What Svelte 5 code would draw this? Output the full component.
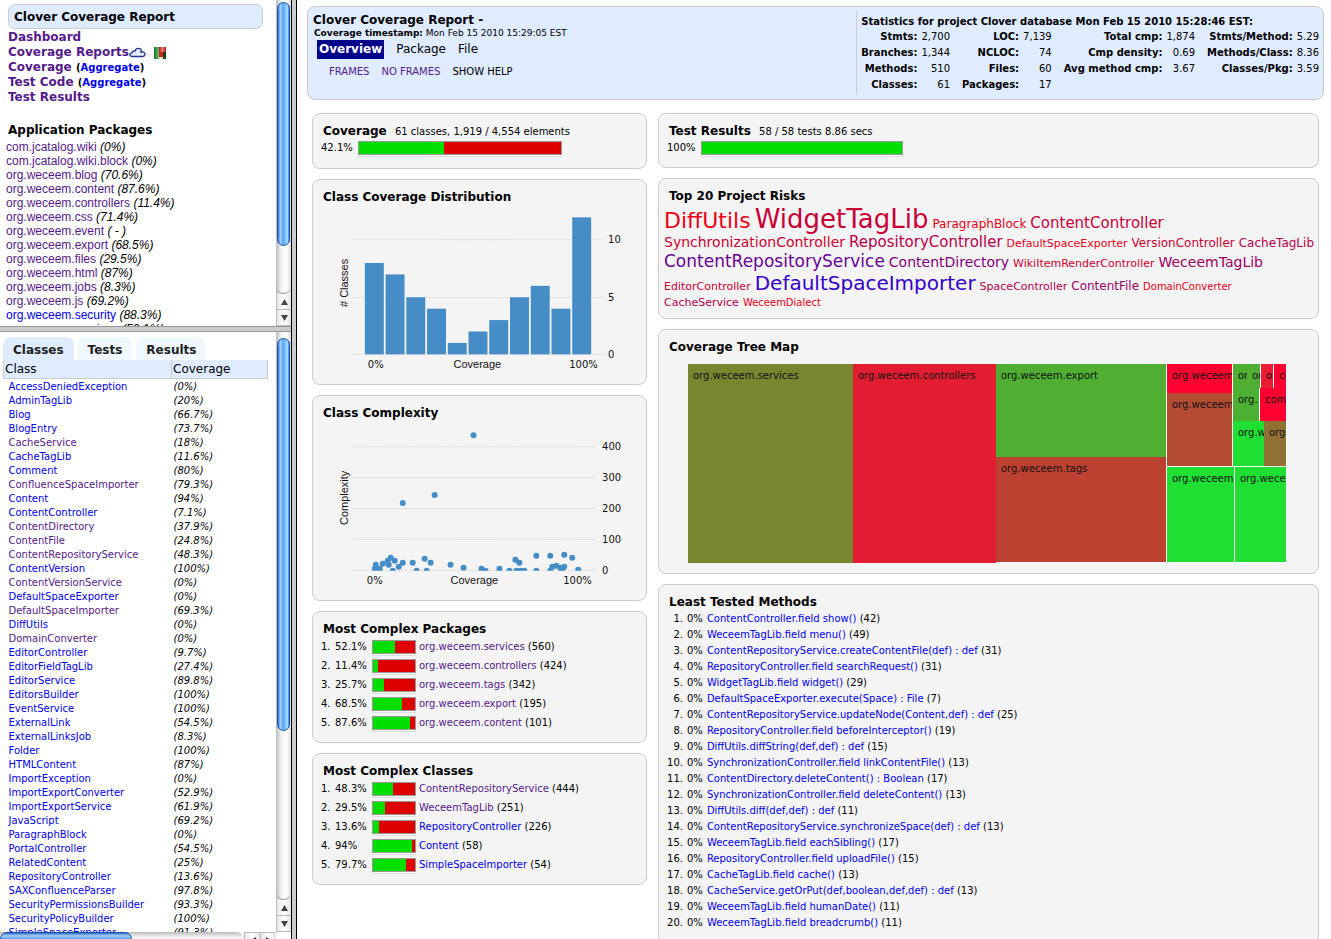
<script>
  const packages = [
    ['com.jcatalog.wiki', '0%'], ['com.jcatalog.wiki.block', '0%'], ['org.weceem.blog', '70.6%'],
    ['org.weceem.content', '87.6%'], ['org.weceem.controllers', '11.4%'], ['org.weceem.css', '71.4%'],
    ['org.weceem.event', ' - '], ['org.weceem.export', '68.5%'], ['org.weceem.files', '29.5%'],
    ['org.weceem.html', '87%'], ['org.weceem.jobs', '8.3%'], ['org.weceem.js', '69.2%'],
    ['org.weceem.security', '88.3%', true], ['org.weceem.services', '52.1%']
  ];
  // name, coverage, visited
  const classes = [
    ['AccessDeniedException', '0%'], ['AdminTagLib', '20%'], ['Blog', '66.7%'], ['BlogEntry', '73.7%'],
    ['CacheService', '18%', 1], ['CacheTagLib', '11.6%'], ['Comment', '80%'], ['ConfluenceSpaceImporter', '79.3%', 1],
    ['Content', '94%'], ['ContentController', '7.1%'], ['ContentDirectory', '37.9%', 1], ['ContentFile', '24.8%', 1],
    ['ContentRepositoryService', '48.3%', 1], ['ContentVersion', '100%'], ['ContentVersionService', '0%', 1],
    ['DefaultSpaceExporter', '0%'], ['DefaultSpaceImporter', '69.3%', 1], ['DiffUtils', '0%'], ['DomainConverter', '0%', 1],
    ['EditorController', '9.7%'], ['EditorFieldTagLib', '27.4%'], ['EditorService', '89.8%'], ['EditorsBuilder', '100%'],
    ['EventService', '100%'], ['ExternalLink', '54.5%'], ['ExternalLinksJob', '8.3%'], ['Folder', '100%'],
    ['HTMLContent', '87%'], ['ImportException', '0%'], ['ImportExportConverter', '52.9%'], ['ImportExportService', '61.9%'],
    ['JavaScript', '69.2%'], ['ParagraphBlock', '0%'], ['PortalController', '54.5%'], ['RelatedContent', '25%'],
    ['RepositoryController', '13.6%'], ['SAXConfluenceParser', '97.8%'], ['SecurityPermissionsBuilder', '93.3%'],
    ['SecurityPolicyBuilder', '100%'], ['SimpleSpaceExporter', '91.3%']
  ];
  const stats = [
    ['Stmts:', '2,700', 'LOC:', '7,139', 'Total cmp:', '1,874', 'Stmts/Method:', '5.29'],
    ['Branches:', '1,344', 'NCLOC:', '74', 'Cmp density:', '0.69', 'Methods/Class:', '8.36'],
    ['Methods:', '510', 'Files:', '60', 'Avg method cmp:', '3.67', 'Classes/Pkg:', '3.59'],
    ['Classes:', '61', 'Packages:', '17', '', '', '', '']
  ];
  const bars = [8, 7, 5, 4, 1, 2, 3, 5, 6, 4, 12];
  const dots = [
    [474, 435], [403, 503], [435, 495], [376, 565], [375, 569], [380, 569], [383, 564], [389, 565], [391, 558],
    [388, 561], [395, 561], [393, 571], [399, 567], [403, 563], [413, 563], [417, 571], [425, 559], [427, 571],
    [431, 563], [451, 565], [464, 568], [482, 569], [486, 571], [500, 569], [510, 571], [516, 560], [520, 563],
    [517, 571], [521, 571], [525, 571], [537, 556], [537, 571], [551, 556], [551, 571], [553, 567], [557, 566],
    [561, 568], [565, 555], [563, 570], [565, 567], [573, 558], [579, 570]
  ];
  const complexity = [
    ['Most Complex Packages', [
      ['52.1%', 'org.weceem.services', 560, 1], ['11.4%', 'org.weceem.controllers', 424, 1],
      ['25.7%', 'org.weceem.tags', 342, 1], ['68.5%', 'org.weceem.export', 195, 1], ['87.6%', 'org.weceem.content', 101, 1]
    ]],
    ['Most Complex Classes', [
      ['48.3%', 'ContentRepositoryService', 444, 1], ['29.5%', 'WeceemTagLib', 251, 1],
      ['13.6%', 'RepositoryController', 226], ['94%', 'Content', 58], ['79.7%', 'SimpleSpaceImporter', 54]
    ]]
  ];
  // row height, then name, font size, colour
  const risks = [
    [29, [['DiffUtils', 22, '#ec0017'], ['WidgetTagLib', 26, '#c80037'], ['ParagraphBlock', 12, '#e2001d'], ['ContentController', 15, '#c80037']]],
    [20, [['SynchronizationController', 14, '#cc0033'], ['RepositoryController', 15, '#b4004b'], ['DefaultSpaceExporter', 11, '#ec0017'], ['VersionController', 12, '#cc0033'], ['CacheTagLib', 12, '#b4004b']]],
    [20, [['ContentRepositoryService', 17, '#6a0095'], ['ContentDirectory', 14, '#84007b'], ['WikiItemRenderController', 11, '#cc0033'], ['WeceemTagLib', 14, '#9c0063']]],
    [23, [['EditorController', 11, '#cc0033'], ['DefaultSpaceImporter', 20, '#3400cb'], ['SpaceController', 11, '#b4004b'], ['ContentFile', 12, '#9c0063'], ['DomainConverter', 10, '#ec0017']]],
    [16, [['CacheService', 11, '#b4004b'], ['WeceemDialect', 10, '#ec0017']]]
  ];
  // x, y, width, height, colour, label
  const cells = [
    [0, 0, 165, 199, '#7a8530', 'org.weceem.services'],
    [165, 0, 143, 199, '#e31d31', 'org.weceem.controllers'],
    [308, 0, 170, 93, '#50ae32', 'org.weceem.export'],
    [308, 93, 170, 105, '#bd4131', 'org.weceem.tags'],
    [479, 0, 65, 29, '#ff0131', 'org.weceem'],
    [479, 29, 65, 73, '#b34c33', 'org.weceem'],
    [545, 0, 14, 24, '#50ae32', 'or'],
    [559, 0, 13, 24, '#50ae32', 'or'],
    [573, 0, 12, 24, '#ec1a33', 'o'],
    [586, 0, 12, 24, '#ff0131', 'co'],
    [545, 24, 26, 33, '#4bb133', 'org.'],
    [572, 24, 26, 33, '#ff0131', 'com'],
    [545, 57, 31, 45, '#20df33', 'org.w'],
    [576, 57, 22, 45, '#917133', 'org'],
    [479, 103, 67, 95, '#20df33', 'org.weceem'],
    [547, 103, 51, 95, '#20df33', 'org.wece']
  ];
  const methods = [
    ['ContentController.field show()', 42], ['WeceemTagLib.field menu()', 49],
    ['ContentRepositoryService.createContentFile(def) : def', 31], ['RepositoryController.field searchRequest()', 31],
    ['WidgetTagLib.field widget()', 29], ['DefaultSpaceExporter.execute(Space) : File', 7],
    ['ContentRepositoryService.updateNode(Content,def) : def', 25], ['RepositoryController.field beforeInterceptor()', 19],
    ['DiffUtils.diffString(def,def) : def', 15], ['SynchronizationController.field linkContentFile()', 13],
    ['ContentDirectory.deleteContent() : Boolean', 17], ['SynchronizationController.field deleteContent()', 13],
    ['DiffUtils.diff(def,def) : def', 11], ['ContentRepositoryService.synchronizeSpace(def) : def', 13],
    ['WeceemTagLib.field eachSibling()', 17], ['RepositoryController.field uploadFile()', 15],
    ['CacheTagLib.field cache()', 13], ['CacheService.getOrPut(def,boolean,def,def) : def', 13],
    ['WeceemTagLib.field humanDate()', 11], ['WeceemTagLib.field breadcrumb()', 11]
  ];
</script>

{#snippet vscroll(size)}
  <div class="vscroll">
    <div class="track"><div class="thumb" style="height: {size}%"></div></div>
    <button aria-label="Scroll up"><svg width="7" height="6" viewBox="0 0 7 6"><path d="M3.500 0L7 6H0Z" fill="#444" /></svg></button>
    <button aria-label="Scroll down"><svg width="7" height="6" viewBox="0 0 7 6"><path d="M0 0H7L3.500 6Z" fill="#444" /></svg></button>
  </div>
{/snippet}

<div class="frames">
  <div class="side">
    <section class="pane top">
      <div class="content">
        <h1>Clover Coverage Report</h1>
        <nav class="links">
          <div><a href="#dashboard">Dashboard</a></div>
          <div class="reports">
            <a href="#reports">Coverage Reports</a>
            <svg width="17" height="11" viewBox="0 0 17 11"><path d="M3.500 9.500C0 9.500 0 6.200 3 5.800C3.500 4.200 5 3.600 6 4.200C6.800 .3 12.600 .3 12.300 4.200C12.200 4.900 11.700 5.300 11.300 5.500C13 4.300 16.300 5.200 16 7.600C15.800 9 14.500 9.500 13.500 9.500Z" fill="#e4ecfb" stroke="#26358c" stroke-width="1.300" /></svg>
            <svg class="map" width="12" height="12" viewBox="0 0 12 12">
              <defs>
                <linearGradient id="mg"><stop offset="0" stop-color="#15702a" /><stop offset="1" stop-color="#6cc46c" /></linearGradient>
                <linearGradient id="mr"><stop offset="0" stop-color="#b01010" /><stop offset=".5" stop-color="#f08070" /><stop offset="1" stop-color="#b00c0c" /></linearGradient>
              </defs>
              <path d="M0 0H5V12H0Z" fill="url(#mg)" /><path d="M5 0H12V5H5Z" fill="url(#mr)" />
              <path d="M5 5H9V10H5Z" fill="#d61f1f" /><path d="M9 5H12V12H9Z" fill="#0d4a12" /><path d="M5 10H9V12H5Z" fill="#f5d9d4" />
            </svg>
          </div>
          <div><a href="#coverage">Coverage</a> <small>(<a class="new" href="#agg">Aggregate</a>)</small></div>
          <div><a href="#test">Test Code</a> <small>(<a class="new" href="#agg2">Aggregate</a>)</small></div>
          <div><a href="#results">Test Results</a></div>
        </nav>
        <h2>Application Packages</h2>
        <ul class="packages">
          {#each packages as [name, pct, fresh]}
            <li><a class:new={fresh} href="#{name}">{name}</a> <i>({pct})</i></li>
          {/each}
        </ul>
      </div>
      {@render vscroll(84)}
    </section>

    <div class="hdivider"></div>

    <section class="pane bottom">
      <div class="content">
        <div class="tabs">
          <button class="on">Classes</button><button>Tests</button><button>Results</button>
        </div>
        <table class="classes">
          <thead><tr><th>Class</th><th>Coverage</th></tr></thead>
          <tbody>
            {#each classes as [name, pct, seen]}
              <tr><td><a class:new={!seen} href="#{name}">{name}</a></td><td><i>({pct})</i></td></tr>
            {/each}
          </tbody>
        </table>
      </div>
      {@render vscroll(70)}
      <div class="hscroll">
        <div class="htrack"><div class="hthumb"></div></div>
        <button aria-label="Scroll left"><svg width="6" height="7" viewBox="0 0 6 7"><path d="M6 0V7L0 3.500Z" fill="#444" /></svg></button>
        <button aria-label="Scroll right"><svg width="6" height="7" viewBox="0 0 6 7"><path d="M0 0V7L6 3.500Z" fill="#444" /></svg></button>
      </div>
    </section>
  </div>
  <div class="vdivider"></div>

  <main>
    <header>
      <div class="title">
        <h1>Clover Coverage Report -</h1>
        <p><b>Coverage timestamp:</b> Mon Feb 15 2010 15:29:05 EST</p>
        <nav class="levels"><a class="on" href="#overview">Overview</a><span>Package</span><span>File</span></nav>
        <nav class="modes"><a href="#frames">FRAMES</a><a href="#noframes">NO FRAMES</a><button>SHOW HELP</button></nav>
      </div>
      <div class="stats">
        <table>
          <caption>Statistics for project Clover database Mon Feb 15 2010 15:28:46 EST:</caption>
          <tbody>
            {#each stats as row}
              <tr>{#each row as cell, i}{#if i % 2 === 0}<th>{cell}</th>{:else}<td>{cell}</td>{/if}{/each}</tr>
            {/each}
          </tbody>
        </table>
      </div>
    </header>

    <div class="dash">
      <div class="col">
        <section class="card summary">
          <h3>Coverage <span>61 classes, 1,919 / 4,554 elements</span></h3>
          <div class="meter"><span>42.1%</span><div class="bar"><div style="width: 42.1%"></div></div></div>
        </section>

        <section class="card chart">
          <h3>Class Coverage Distribution</h3>
          <svg viewBox="313 205 334 178" height="178">
            {#each [[239, 10], [297, 5], [354, 0]] as [y, label]}
              <line x1="353" x2="603" y1={y + 0.5} y2={y + 0.5} />
              <text x="609" y={y + 4}>{label}</text>
            {/each}
            {#each bars as v, i}
              <rect x={365 + i * 20.8} y={354.5 - v * 11.45} width="19" height={v * 11.45} />
            {/each}
            <text x="368" y="368">0%</text><text class="ar" x="454" y="368">Coverage</text><text x="570" y="368">100%</text>
            <text class="ar" transform="translate(348 307) rotate(-90)"># Classes</text>
          </svg>
        </section>

        <section class="card chart">
          <h3>Class Complexity</h3>
          <svg viewBox="313 421 334 178" height="178">
            <defs><clipPath id="plot"><path d="M340 420H620V571H340Z" /></clipPath></defs>
            {#each [[446, 400], [477, 300], [508, 200], [539, 100], [570, 0]] as [y, label]}
              <line x1="353" x2="596" y1={y + 0.5} y2={y + 0.5} />
              <text x="603" y={y + 4}>{label}</text>
            {/each}
            <g clip-path="url(#plot)">{#each dots as [x, y]}<circle cx={x} cy={y} r="3" />{/each}</g>
            <text x="367" y="584">0%</text><text class="ar" x="451" y="584">Coverage</text><text x="564" y="584">100%</text>
            <text class="ar" transform="translate(348 525) rotate(-90)">Complexity</text>
          </svg>
        </section>

        {#each complexity as [title, rows]}
          <section class="card complex">
            <h3>{title}</h3>
            <table>
              <tbody>
                {#each rows as [pct, name, n, seen], i}
                  <tr>
                    <td>{i + 1}.</td><td>{pct}</td>
                    <td><div class="bar"><div style="width: {pct}"></div></div></td>
                    <td><a class:new={!seen} href="#{name}">{name}</a> ({n})</td>
                  </tr>
                {/each}
              </tbody>
            </table>
          </section>
        {/each}
      </div>

      <div class="col">
        <section class="card summary tests">
          <h3>Test Results <span>58 / 58 tests 8.86 secs</span></h3>
          <div class="meter"><span>100%</span><div class="bar"><div style="width: 100%"></div></div></div>
        </section>

        <section class="card risks">
          <h3>Top 20 Project Risks</h3>
          {#each risks as [height, items]}
            <div class="cloudrow" style="height: {height}px">
              {#each items as [name, size, color]}
                <a href="#{name}" style="font-size: {size}px; color: {color}">{name}</a>
              {/each}
            </div>
          {/each}
        </section>

        <section class="card tree">
          <h3>Coverage Tree Map</h3>
          <svg viewBox="0 0 599 199" width="599" height="199">
            <rect width="599" height="199" fill="#fff" />
            {#each cells as [x, y, w, h, color, label]}
              <svg {x} {y} width={w} height={h}>
                <rect width={w} height={h} fill={color} />
                <text x="5" y="15">{label}</text>
              </svg>
            {/each}
          </svg>
        </section>

        <section class="card least">
          <h3>Least Tested Methods</h3>
          <table>
            <tbody>
              {#each methods as [name, n], i}
                <tr><td>{i + 1}.</td><td>0%</td><td><a class="new" href="#m{i}">{name}</a> ({n})</td></tr>
              {/each}
            </tbody>
          </table>
        </section>
      </div>
    </div>
  </main>
</div>

<style>
  :global(body) { margin: 0; background: #fff; }
  .frames { display: flex; height: 100vh; overflow: hidden; font: 10px/14px "DejaVu Sans", Verdana, sans-serif; color: #000; }
  h1, h2, h3, p, ul { margin: 0; padding: 0; }
  h1, h2, h3 { font-size: 12px; line-height: 16px; font-weight: bold; }
  a { color: #551a8b; text-decoration: none; }
  a.new { color: #0000ee; }
  button { border: 0; padding: 0; font: inherit; color: inherit; background: none; }
  table { border-collapse: collapse; }
  td, th { padding: 0; }

  .side { flex: 0 1 291px; display: flex; flex-direction: column; min-width: 0; }
  .vdivider { flex: none; width: 4px; background: #ccc; border: solid; border-width: 0 1px; border-color: #999 #000; }
  .hdivider { flex: none; height: 4px; background: #ccc; border: solid; border-width: 1px 0; border-color: #999 #000; }
  .pane { display: grid; grid-template-columns: minmax(0, 1fr) 15px; overflow: hidden; }
  .content { overflow: hidden; min-height: 0; }
  .top { flex: 0 0 326px; grid-template-rows: minmax(0, 1fr); }
  .bottom { flex: 1; min-height: 0; grid-template-rows: minmax(0, 1fr) 7px; }

  .top h1 { margin: 4px 13px 1px 8px; padding: 4px 5px 3px; border: 1px solid #ccc; border-radius: 7px; background: #dfebff; }
  .links { padding-left: 8px; font-size: 12px; font-weight: bold; line-height: 15px; }
  .links small { font-size: 10px; }
  .reports { display: flex; align-items: center; height: 15px; }
  .links .map { margin-left: 8px; }
  .top h2 { margin: 17px 0 2px 8px; }
  .packages { list-style: none; padding-left: 6px; font: 12px/14px "Liberation Sans", Arial, sans-serif; white-space: pre; }

  .vscroll { display: flex; flex-direction: column; background: linear-gradient(90deg, #bbb, #f4f4f4 35%, #fff 70%, #ddd); min-height: 0; }
  .track { flex: 1; min-height: 0; border-radius: 0 0 8px 8px; border-bottom: 1px solid #999; padding-top: 2px; box-sizing: border-box; }
  .bottom .track { padding-top: 6px; }
  .thumb { margin: 0 1px; box-sizing: border-box; border: 1px solid #1d4fa0; border-radius: 7px; background: linear-gradient(90deg, #2b6fd0, #a8d0fa 22%, #5ba4f0 45%, #6db8fa 60%, #a5e2ff 85%, #3b80d8); }
  .vscroll button, .hscroll button { display: grid; place-items: center; background: linear-gradient(90deg, #e8e8e8, #fff 50%, #e4e4e4); border: solid #bbb; }
  .vscroll button { height: 16px; border-width: 0 0 1px 1px; }
  .hscroll { display: flex; grid-column: 1 / 3; padding-right: 15px; overflow: hidden; }
  .htrack { flex: 1; height: 15px; background: linear-gradient(#bbb, #f4f4f4 35%, #fff); border-radius: 0 8px 8px 0; }
  .hthumb { width: 54%; height: 15px; box-sizing: border-box; border: 1px solid #1d4fa0; border-radius: 7px; background: linear-gradient(#2b6fd0, #a8d0fa 22%, #5ba4f0 45%, #a5e2ff); }
  .hscroll button { width: 16px; height: 15px; border-width: 1px 0 0 1px; }

  .tabs { display: flex; gap: 4px; margin: 5px 0 0 3px; }
  .tabs button { height: 23px; padding: 2px 10px 0; border-radius: 8px 8px 0 0; background: #eff7ff; font-size: 12px; font-weight: bold; color: #222; }
  .tabs .on { background: #dfebff; }
  .classes { margin-left: 3px; width: 265px; table-layout: fixed; }
  .classes th { width: 94px; height: 18px; padding: 0 0 0 1px; background: #dfebff; border: 1px solid #ccc; border-width: 0 1px 1px; font-size: 12px; font-weight: normal; text-align: left; }
  .classes th:first-child { width: auto; }
  .classes tbody::before { content: ""; display: block; height: 1px; }
  .classes td { height: 14px; padding-left: 2px; white-space: nowrap; }
  .classes td:first-child { padding-left: 5px; }

  main { flex: 1; min-width: 0; padding: 6px 7px 0 10px; overflow: hidden; }
  header { display: flex; justify-content: space-between; box-sizing: border-box; min-height: 94px; padding: 4px 4px 4px 5px; border: 1px solid #ccc; border-radius: 8px; background: #dfebff; }
  header h1 { padding-top: 1px; }
  header p { padding-left: 1px; font-size: 9px; line-height: 10px; }
  .levels { display: flex; align-items: center; gap: 12px; padding: 2px 0 0 4px; font-size: 12px; line-height: 19px; }
  .levels .on { padding: 0 2px; background: #00008b; color: #fff; font-weight: bold; }
  .modes { display: flex; gap: 12px; padding: 6px 0 0 16px; }
  .stats { border-left: 1px solid #ccc; padding-left: 4px; }
  .stats caption { padding: 3px 0 0; text-align: left; font-weight: bold; white-space: nowrap; line-height: 15px; }
  .stats td, .stats th { height: 16px; line-height: 16px; text-align: right; white-space: nowrap; }
  .stats td { padding-left: 4px; }
  .stats th:not(:first-child) { padding-left: 12px; }

  .dash { display: grid; grid-template-columns: minmax(0, 335fr) minmax(0, 661fr); gap: 11px; padding: 13px 5px 0; }
  .col { display: flex; flex-direction: column; gap: 10px; }
  .card { box-sizing: border-box; border: 1px solid #ccc; border-radius: 8px; background: #f4f4f4; padding: 9px 0 0 10px; }
  .summary { height: 56px; }
  .tests { height: 55px; }
  .summary h3 span { margin-left: 4px; font-size: 10px; font-weight: normal; }
  .meter { display: flex; align-items: center; gap: 5px; margin: 1px 0 0 -2px; }
  .bar { box-sizing: border-box; border: 1px solid #999; background: #df0000; box-shadow: 0 1px #f8f8f8, 0 2px #ddd; }
  .bar div { height: 100%; background: #00df00; }
  .meter .bar { width: 204px; height: 14px; }
  .tests .bar { width: 202px; }
  .chart { padding: 9px 0 0; height: 206px; }
  .chart h3 { padding-left: 10px; }
  .chart svg { display: block; width: 100%; }
  .chart rect, .chart circle { fill: #468dc8; }
  .chart line { stroke: #ddd; stroke-dasharray: 3 1; }
  svg text { font: 10px "DejaVu Sans", Verdana, sans-serif; fill: #111; }
  .chart text.ar { font: 11px "Liberation Sans", Arial, sans-serif; }
  .complex { min-height: 132px; }
  .complex table { margin-left: -2px; }
  .complex td { height: 19px; white-space: nowrap; }
  .complex td:nth-child(1) { width: 14px; }
  .complex td:nth-child(2) { width: 37px; }
  .complex .bar { width: 44px; height: 14px; margin-right: 3px; }

  .risks { height: 141px; padding-left: 5px; }
  .risks h3 { padding: 0 0 1px 5px; }
  .cloudrow { display: flex; align-items: last baseline; gap: 4px; line-height: 20px; }
  .tree { height: 245px; }
  .tree svg { display: block; }
  .tree > svg { margin: 9px 0 0 19px; }
  .least { padding-bottom: 12px; }
  .least table { margin: 1px 0 0 -3px; }
  .least td { height: 16px; white-space: nowrap; }
  .least td:nth-child(1) { width: 17px; text-align: right; }
  .least td:nth-child(2) { padding: 0 4px; }
</style>
